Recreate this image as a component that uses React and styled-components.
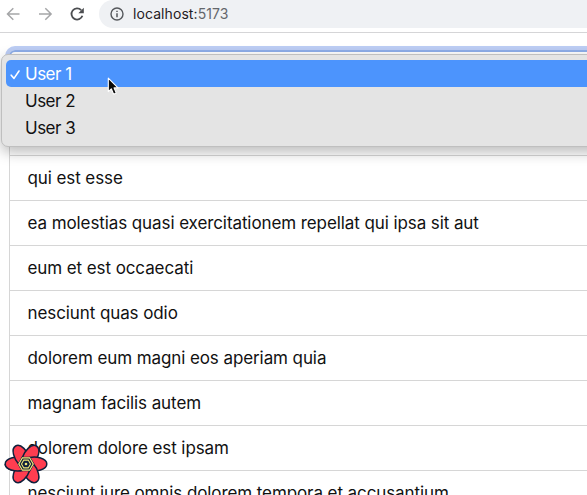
import React from 'react';
import styled, { createGlobalStyle } from 'styled-components';

const GlobalStyle = createGlobalStyle`
  * { box-sizing: border-box; }
  html, body { margin: 0; padding: 0; overflow: hidden; background: #fff; }
`;

const Window = styled.div`
  position: relative;
  width: 100%;
  height: 495px;
  overflow: hidden;
  background: #fff;
  color: #111;
  font-family: Inter, "Liberation Sans", sans-serif;
`;

const Toolbar = styled.header`
  display: flex;
  align-items: flex-start;
  height: 33px;
  border-bottom: 1px solid #d5d5d7;
`;

const NavButtons = styled.nav`
  display: flex;
  width: 99px;
  height: 28px;
  align-items: center;
  flex: none;
  svg { display: block; flex: none; }
`;

const AddressBar = styled.div`
  display: flex;
  align-items: center;
  flex: 1;
  height: 28px;
  padding-left: 11px;
  border-radius: 14px 0 0 14px;
  background: #eff1f4;
`;

const Address = styled.span`
  margin-left: 9px;
  font-size: 14px;
  line-height: 28px;
  letter-spacing: 0.08px;
  color: #1f2023;
  white-space: nowrap;
`;

const Port = styled.span`
  color: #64676c;
`;

const Page = styled.main`
  padding: 17px 0 0 9px;
`;

const Select = styled.div`
  height: 40px;
  margin-right: -20px;
  border: 2px solid #8eaeea;
  border-radius: 6px;
  box-shadow: 0 0 0 4px #bccdf4;
`;

const PostList = styled.ul`
  margin: 20px -20px 0 0;
  padding: 0;
  list-style: none;
  border: 1px solid #d6d6d6;
`;

const Post = styled.li`
  height: 45px;
  padding: 0 18px 0 17.5px;
  border-bottom: 1px solid #d6d6d6;
  font-size: 17px;
  line-height: 45px;
  letter-spacing: -0.09px;
  white-space: nowrap;
`;

const Menu = styled.div`
  position: absolute;
  top: 54px;
  left: 1px;
  right: -20px;
  height: 93px;
  padding: 5px 4px;
  border: 1px solid #bfbfbf;
  border-radius: 7px;
  background: #e4e4e4;
  box-shadow: 0 5px 14px rgba(0, 0, 0, 0.27);
`;

const Option = styled.div`
  display: flex;
  align-items: center;
  height: 27px;
  border-radius: 5px;
  font-size: 17px;
  line-height: 27px;
  letter-spacing: -0.5px;
  color: ${(p) => (p.$selected ? '#fff' : '#111')};
  background: ${(p) => (p.$selected ? '#4c94fd' : 'transparent')};
`;

const OptionLabel = styled.span`
  padding-top: 1px;
`;

const CheckSlot = styled.span`
  display: flex;
  width: 19px;
  padding-left: 4px;
  flex: none;
`;

const Pointer = styled.svg`
  position: absolute;
  left: 107px;
  top: 77px;
`;

const DevtoolsButton = styled.div`
  position: absolute;
  left: 3px;
  top: 441px;
  width: 46px;
  height: 46px;
`;

const posts = [
  'sunt aut facere repellat provident',
  'qui est esse',
  'ea molestias quasi exercitationem repellat qui ipsa sit aut',
  'eum et est occaecati',
  'nesciunt quas odio',
  'dolorem eum magni eos aperiam quia',
  'magnam facilis autem',
  'dolorem dolore est ipsam',
  'nesciunt iure omnis dolorem tempora et accusantium',
];

const users = ['User 1', 'User 2', 'User 3'];

const Arrow = ({ right }) => (
  <svg width="32" height="28" viewBox="0 0 32 28" fill="none" stroke="#a5a6a8" strokeWidth="1.5">
    {right ? <path d="M7 14H19M13.3 8.2L19.1 14L13.3 19.8" /> : <path d="M19.5 14H7.7M13.3 8.2L7.5 14L13.3 19.8" />}
  </svg>
);

const Reload = () => (
  <svg width="32" height="28" viewBox="0 0 32 28">
    <path d="M17.2 10.1A5.6 5.6 0 1 0 18.4 15.8" fill="none" stroke="#4b4d50" strokeWidth="1.8" />
    <path d="M19.8 7.7V13.2H14.3Z" fill="#4b4d50" />
  </svg>
);

const Info = () => (
  <svg width="14" height="14" viewBox="0 0 14 14" fill="none" stroke="#55585c" strokeWidth="1.4">
    <circle cx="7" cy="7" r="6" />
    <path d="M7 6.2V10.3M7 3.7V5.1" strokeWidth="1.5" />
  </svg>
);

const Petal = ({ angle }) => (
  <path
    transform={`rotate(${angle})`}
    d="M-3.5 6.4C-10 7.8 -20.8 6 -20.8 0C-20.8 -6 -10 -7.8 -3.5 -6.4L-7.2 0Z"
    fill="#ff3d50"
    stroke="#10203c"
    strokeWidth="1.5"
    strokeLinejoin="round"
  />
);

const QueryLogo = () => (
  <svg width="46" height="46" viewBox="-23 -23 46 46">
    <defs>
      <clipPath id="lowerHalf"><rect x="-23" y="0" width="23" height="23" /></clipPath>
    </defs>
    {[0, 60, 120, 180, 240, 300].map((a) => <Petal key={a} angle={a} />)}
    <g clipPath="url(#lowerHalf)"><Petal angle={0} /></g>
    <path d="M-8.4 0L-4.2 -7.2H4.2L8.4 0L4.2 7.2H-4.2Z" fill="#10203c" />
    <path d="M-7.2 0L-3.6 -6.2H3.6L7.2 0L3.6 6.2H-3.6Z" fill="none" stroke="#f4e979" strokeWidth="1.2" />
    <path d="M-4.5 0L-2.25 -3.9H2.25L4.5 0L2.25 3.9H-2.25Z" fill="none" stroke="#f4e979" strokeWidth="1.1" />
    <circle r="1.3" fill="#f4e979" />
  </svg>
);

export default function App() {
  return (
    <Window>
      <GlobalStyle />
      <Toolbar>
        <NavButtons>
          <Arrow />
          <Arrow right />
          <Reload />
        </NavButtons>
        <AddressBar>
          <Info />
          <Address>localhost:<Port>5173</Port></Address>
        </AddressBar>
      </Toolbar>
      <Page>
        <Select />
        <PostList>
          {posts.map((post) => <Post key={post}>{post}</Post>)}
        </PostList>
      </Page>
      <Menu>
        {users.map((user, i) => (
          <Option key={user} $selected={i === 0}>
            <CheckSlot>
              {i === 0 && (
                <svg width="11" height="12" viewBox="0 0 11 12" fill="none" stroke="#fff" strokeWidth="1.6" strokeLinecap="round" strokeLinejoin="round">
                  <path d="M1.2 7.2L4 10.4L9 3" />
                </svg>
              )}
            </CheckSlot>
            <OptionLabel>{user}</OptionLabel>
          </Option>
        ))}
      </Menu>
      <Pointer width="14" height="20" viewBox="0 0 14 20">
        <path d="M1.3 1.2V14.6L4.3 11.8L6.6 17.3L9.3 16.1L7 10.9H11Z" fill="#0b0b0b" stroke="#fff" strokeWidth="1.1" strokeLinejoin="round" />
      </Pointer>
      <DevtoolsButton><QueryLogo /></DevtoolsButton>
    </Window>
  );
}
